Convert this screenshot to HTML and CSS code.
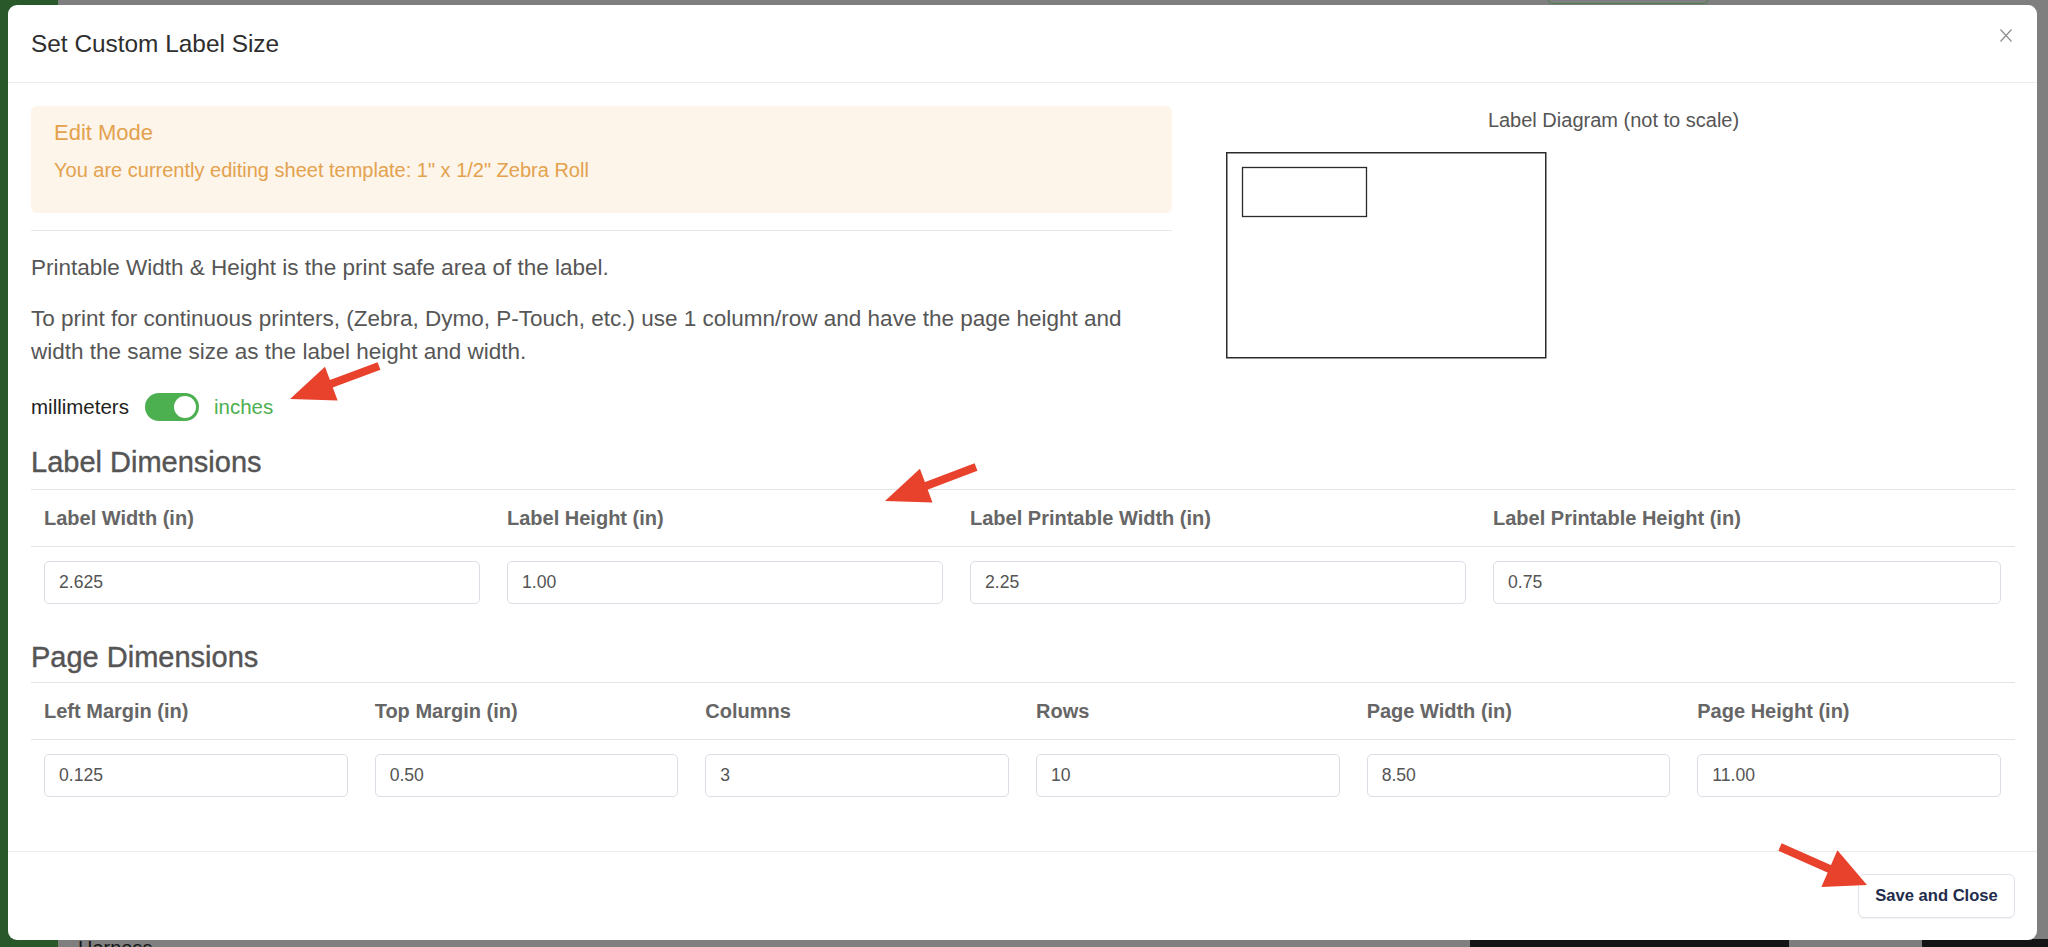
FILE: index.html
```html
<!DOCTYPE html>
<html lang="en">
<head>
<meta charset="utf-8">
<title>Set Custom Label Size</title>
<link rel="stylesheet" href="styles.css">
</head>
<body>
<div class="app-bg">
  <div class="app-sidebar"></div>
  <div class="app-main">
    <div class="app-topbar"><span class="app-topbtn"></span></div>
    <div class="app-bottom">
      <span class="app-row-text">Harness</span>
      <span class="app-dark"><span class="app-dark-block"></span></span>
    </div>
  </div>
</div>

<div class="modal">
  <div class="modal-header">
    <h5 class="modal-title">Set Custom Label Size</h5>
    <button class="close" type="button" aria-label="Close">
      <svg width="12" height="13" viewBox="0 0 12 13"><path d="M0.5 0.5 L11.5 12.5 M11.5 0.5 L0.5 12.5" stroke="#8d8d8d" stroke-width="1.2" fill="none"/></svg>
    </button>
  </div>

  <div class="modal-body">
    <div class="top-row">
      <div class="top-left">
        <div class="alert">
          <h4 class="alert-title">Edit Mode</h4>
          <p class="alert-text">You are currently editing sheet template: 1" x 1/2" Zebra Roll</p>
        </div>
        <hr class="divider">
        <p class="help">Printable Width &amp; Height is the print safe area of the label.</p>
        <p class="help">To print for continuous printers, (Zebra, Dymo, P-Touch, etc.) use 1 column/row and have the page height and width the same size as the label height and width.</p>
        <div class="units">
          <span class="units-off">millimeters</span>
          <span class="switch"><span class="knob"></span></span>
          <span class="units-on">inches</span>
        </div>
      </div>
      <div class="top-right">
        <p class="diagram-title">Label Diagram (not to scale)</p>
        <svg class="diagram" width="322" height="208" viewBox="0 0 322 208">
          <rect x="0.75" y="0.75" width="319" height="205" fill="#fff" stroke="#2b2b2b" stroke-width="1.5"/>
          <rect x="16.5" y="15.5" width="124" height="49" fill="#fff" stroke="#2b2b2b" stroke-width="1.3"/>
        </svg>
      </div>
    </div>

    <h3 class="section-title">Label Dimensions</h3>
    <table class="dims">
      <colgroup><col class="c463"><col class="c463"><col class="c523"><col class="c535"></colgroup>
      <thead>
        <tr><th>Label Width (in)</th><th>Label Height (in)</th><th>Label Printable Width (in)</th><th>Label Printable Height (in)</th></tr>
      </thead>
      <tbody>
        <tr>
          <td><input class="field" type="text" value="2.625"></td>
          <td><input class="field" type="text" value="1.00"></td>
          <td><input class="field" type="text" value="2.25"></td>
          <td><input class="field" type="text" value="0.75"></td>
        </tr>
      </tbody>
    </table>

    <h3 class="section-title section-title--page">Page Dimensions</h3>
    <table class="dims">
      <thead>
        <tr><th>Left Margin (in)</th><th>Top Margin (in)</th><th>Columns</th><th>Rows</th><th>Page Width (in)</th><th>Page Height (in)</th></tr>
      </thead>
      <tbody>
        <tr>
          <td><input class="field" type="text" value="0.125"></td>
          <td><input class="field" type="text" value="0.50"></td>
          <td><input class="field" type="text" value="3"></td>
          <td><input class="field" type="text" value="10"></td>
          <td><input class="field" type="text" value="8.50"></td>
          <td><input class="field" type="text" value="11.00"></td>
        </tr>
      </tbody>
    </table>
  </div>

  <div class="modal-footer">
    <button class="btn-save" type="button">Save and Close</button>
  </div>
</div>

<svg class="annotations" width="2048" height="947" viewBox="0 0 2048 947">
  <g fill="#e8412c" stroke="#e8412c">
    <line x1="379" y1="366" x2="328" y2="385" stroke-width="8"/>
    <polygon points="290,399 337.6,400.6 325,366.8" stroke="none"/>
    <line x1="976" y1="467" x2="922" y2="487.5" stroke-width="8"/>
    <polygon points="885,501 932.5,502.5 919.9,468.7" stroke="none"/>
    <line x1="1780" y1="847" x2="1833" y2="870.5" stroke-width="8"/>
    <polygon points="1867,885 1821.4,886.9 1837.4,850.3" stroke="none"/>
  </g>
</svg>
</body>
</html>
```

FILE: styles.css
```css
* { box-sizing: border-box; }

html, body { margin: 0; padding: 0; }

body {
  width: 2048px;
  height: 947px;
  overflow: hidden;
  position: relative;
  background: #7f7f7f;
  font-family: "Liberation Sans", Arial, sans-serif;
}

/* page behind the dialog */
.app-bg { display: flex; height: 100%; }
.app-sidebar { width: 58px; background: #29592a; }
.app-main {
  flex: 1;
  display: flex;
  flex-direction: column;
  justify-content: space-between;
}
.app-topbar { height: 5px; position: relative; }
.app-topbtn {
  position: absolute;
  left: 1490px;
  top: -7px;
  width: 160px;
  height: 11px;
  border: 1px solid #4d7d4d;
  border-radius: 4px;
}
.app-bottom { height: 8px; display: flex; overflow: hidden; }
.app-row-text {
  width: 1412px;
  padding-left: 20px;
  font-size: 20px;
  line-height: 18px;
  color: #161616;
}
.app-dark { flex: 1; display: flex; background: #151515; }
.app-dark-block { margin-left: 319px; width: 133px; background: #7d7d7d; }

/* dialog */
.modal {
  position: absolute;
  left: 8px;
  top: 5px;
  width: 2029px;
  background: #fff;
  border-radius: 9px;
}

.modal-header {
  height: 78px;
  display: flex;
  align-items: center;
  justify-content: space-between;
  padding: 0 25px 0 23px;
  border-bottom: 1px solid #e9ecef;
}
.modal-title {
  margin: 0;
  font-size: 24.4px;
  line-height: 30px;
  font-weight: 400;
  color: #2e2e2e;
}
.close {
  align-self: flex-start;
  margin-top: 24px;
  width: 12px;
  height: 13px;
  padding: 0;
  border: 0;
  background: none;
  display: block;
}
.close svg { display: block; }

.modal-body { padding: 23px 22px 40px 23px; }

.top-row {
  display: grid;
  grid-template-columns: 1141px 1fr;
  column-gap: 54px;
}

.alert {
  background: #fdf4ea;
  border-radius: 6px;
  padding: 14px 23px;
  color: #e3a24d;
}
.alert-title {
  margin: 0 0 12px;
  font-size: 22px;
  line-height: 26px;
  font-weight: 400;
}
.alert-text {
  margin: 0 0 17px;
  font-size: 20px;
  line-height: 24px;
}

.divider {
  margin: 17px 0 0;
  height: 0;
  border: 0;
  border-top: 1px solid #e7e7e7;
}

.help {
  margin: 20px 0 0;
  font-size: 22.5px;
  line-height: 33px;
  color: #565656;
}
.help + .help { margin-top: 18px; }

.units {
  display: flex;
  align-items: center;
  height: 28px;
  margin-top: 25px;
  font-size: 20.5px;
}
.units-off { color: #222; }
.units-on { color: #4caf50; }
.switch {
  display: flex;
  justify-content: flex-end;
  align-items: center;
  width: 54px;
  height: 28px;
  margin: 0 15px 0 16px;
  padding: 3px;
  border-radius: 14px;
  background: #4caf50;
}
.knob {
  width: 22px;
  height: 22px;
  border-radius: 50%;
  background: #fff;
}

.diagram-title {
  margin: 0;
  padding-right: 14px;
  text-align: center;
  font-size: 20px;
  line-height: 28px;
  color: #555;
}
.diagram { display: block; margin-top: 18px; }

.section-title {
  margin: 24px 0 9px;
  font-size: 29px;
  line-height: 35px;
  font-weight: 400;
  color: #555;
  -webkit-text-stroke: 0.4px #555;
}
.section-title--page { margin: 22px 0 7px; }

.dims {
  width: 100%;
  table-layout: fixed;
  border-collapse: collapse;
  border-top: 1px solid #e4e4e4;
}
.c463 { width: 463px; }
.c523 { width: 523px; }
.c535 { width: 535px; }

.dims th {
  padding: 16px 14px 16px 13px;
  text-align: left;
  font-size: 20px;
  line-height: 24px;
  font-weight: 700;
  color: #666;
  border-bottom: 1px solid #e4e4e4;
}
.dims td { padding: 14px 14px 14px 13px; }

.field {
  display: block;
  width: 100%;
  height: 43px;
  padding: 0 14px;
  border: 1px solid #dcdee6;
  border-radius: 5px;
  background: #fff;
  font-family: "Liberation Sans", Arial, sans-serif;
  font-size: 17.6px;
  color: #555;
}

.modal-footer {
  display: flex;
  justify-content: flex-end;
  padding: 22px;
  border-top: 1px solid #e9ecef;
}
.btn-save {
  width: 157px;
  height: 44px;
  padding: 0;
  border: 1px solid #dfe3ea;
  border-radius: 6px;
  background: #fff;
  box-shadow: 0 1px 1px rgba(0, 0, 0, 0.05);
  font-family: "Liberation Sans", Arial, sans-serif;
  font-size: 16.6px;
  font-weight: 700;
  color: #1f2c4b;
}

.annotations {
  position: absolute;
  left: 0;
  top: 0;
  pointer-events: none;
}
```
